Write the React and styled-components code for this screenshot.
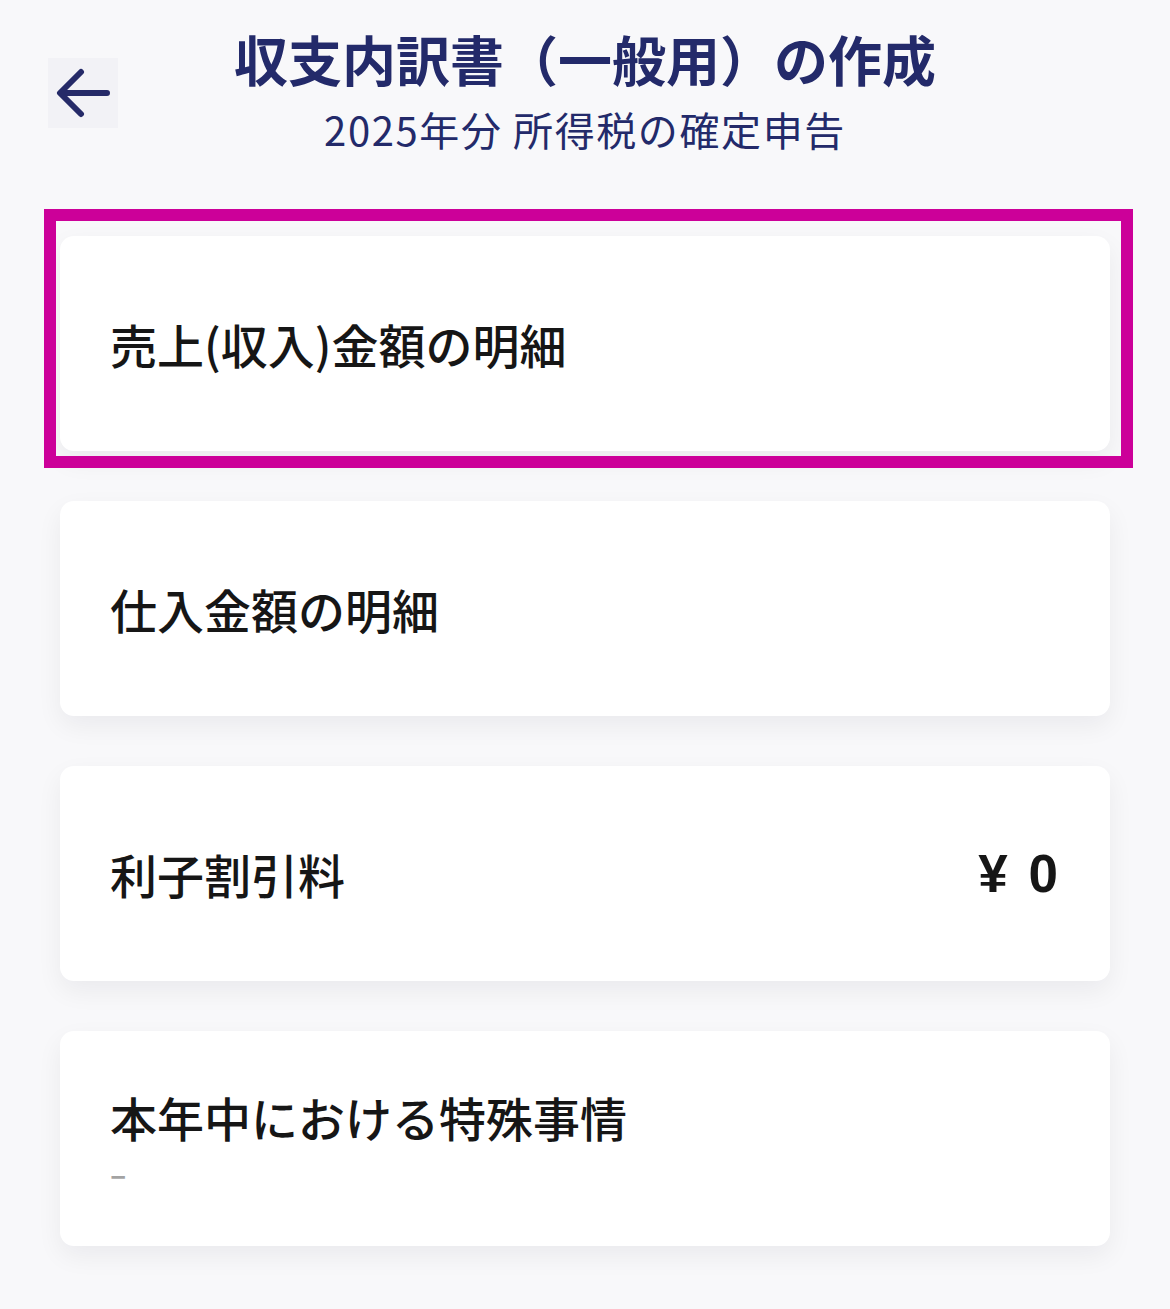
import React from "react";
import styled, { createGlobalStyle } from "styled-components";

const Global = createGlobalStyle`
  html, body { margin: 0; padding: 0; background: #f8f8fa; }
  body { font-family: "Noto Sans CJK JP", "Noto Sans", sans-serif; }
`;

const Page = styled.div`
  min-height: 1309px;
  background: #f8f8fa;
  display: flex;
  flex-direction: column;
`;

const Header = styled.header`
  display: grid;
  grid-template-columns: 1fr auto 1fr;
  align-items: start;
  padding: 26px 0 0;
`;

const BackButton = styled.button`
  justify-self: start;
  margin: 32px 0 0 48px;
  width: 70px;
  height: 70px;
  border: none;
  padding: 0;
  background: #f2f2f6;
  display: flex;
  align-items: center;
  justify-content: center;
  color: #252a68;
`;

const TitleBlock = styled.div`
  display: flex;
  flex-direction: column;
  align-items: center;
`;

const Title = styled.h1`
  margin: 0;
  font-size: 54px;
  line-height: 65px;
  font-weight: 700;
  color: #232a6a;
  white-space: nowrap;
`;

const Subtitle = styled.p`
  margin: 14px 0 0;
  font-size: 40px;
  line-height: 48px;
  font-weight: 400;
  color: #232a6a;
  white-space: nowrap;
  letter-spacing: 1.6px;
`;

const List = styled.div`
  display: flex;
  flex-direction: column;
  gap: 50px;
  padding: 83px 60px 0;
`;

const Item = styled.div`
  position: relative;
`;

const Card = styled.div`
  min-height: 215px;
  box-sizing: border-box;
  background: #ffffff;
  border-radius: 14px;
  box-shadow: 0 10px 26px rgba(20, 20, 40, 0.06);
  display: flex;
  align-items: center;
  justify-content: space-between;
  padding: 0 52px 0 50px;
`;

const Texts = styled.div`
  display: flex;
  flex-direction: column;
`;

const Label = styled.span`
  font-size: 47px;
  line-height: 64px;
  font-weight: 500;
  color: #161616;
  white-space: nowrap;
`;

const Sub = styled.span`
  font-size: 30px;
  line-height: 40px;
  font-weight: 700;
  color: #a3a3a3;
  margin-top: 4px;
`;

const Amount = styled.span`
  font-family: "Liberation Sans", Arial, sans-serif;
  font-size: 53px;
  font-weight: 700;
  color: #161616;
  white-space: nowrap;
  word-spacing: 6px;
`;

const Highlight = styled.div`
  position: absolute;
  top: -27px;
  left: -16px;
  right: -23px;
  bottom: -17px;
  border: 12px solid #cc0099;
  pointer-events: none;
`;

const items = [
  { label: "売上(収入)金額の明細", highlight: true },
  { label: "仕入金額の明細" },
  { label: "利子割引料", amount: "¥ 0" },
  { label: "本年中における特殊事情", sub: "–" },
];

export default function App() {
  return (
    <Page>
      <Global />
      <Header>
        <BackButton aria-label="戻る">
          <svg width="56" height="50" viewBox="0 0 56 50" fill="none">
            <path
              d="M52 25H6M26 4L5 25l21 21"
              stroke="currentColor"
              strokeWidth="6"
              strokeLinecap="round"
              strokeLinejoin="round"
            />
          </svg>
        </BackButton>
        <TitleBlock>
          <Title>収支内訳書（一般用）の作成</Title>
          <Subtitle>2025年分 所得税の確定申告</Subtitle>
        </TitleBlock>
        <div />
      </Header>
      <List>
        {items.map((it) => (
          <Item key={it.label}>
            <Card>
              <Texts>
                <Label>{it.label}</Label>
                {it.sub && <Sub>{it.sub}</Sub>}
              </Texts>
              {it.amount && <Amount>{it.amount}</Amount>}
            </Card>
            {it.highlight && <Highlight />}
          </Item>
        ))}
      </List>
    </Page>
  );
}
